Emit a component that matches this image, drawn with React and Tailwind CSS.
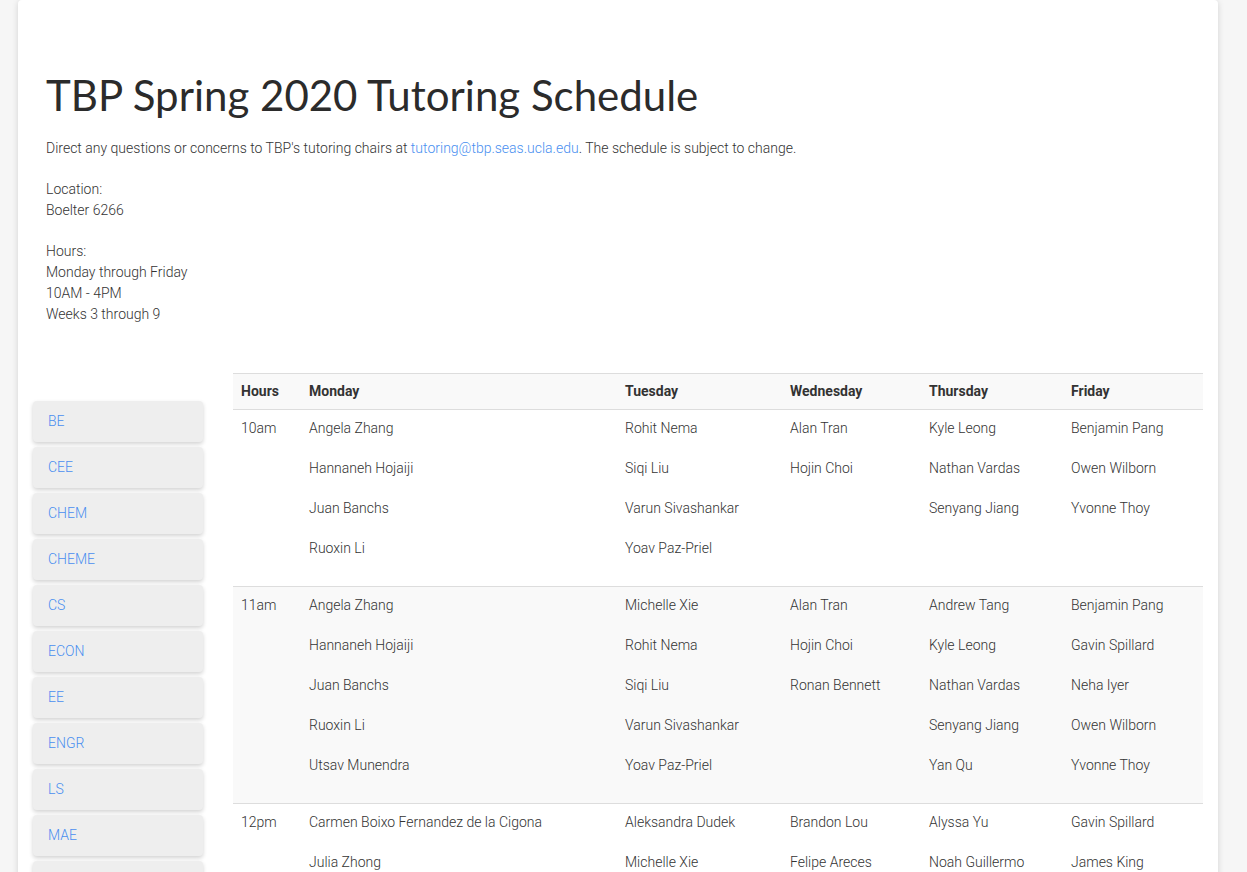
const majors = ['BE', 'CEE', 'CHEM', 'CHEME', 'CS', 'ECON', 'EE', 'ENGR', 'LS', 'MAE', 'MATH', 'MSE', 'PHYSICS', 'STATS'];

const days = ['Monday', 'Tuesday', 'Wednesday', 'Thursday', 'Friday'];

const schedule = [
  {
    hour: '10am',
    slots: [
      ['Angela Zhang', 'Hannaneh Hojaiji', 'Juan Banchs', 'Ruoxin Li'],
      ['Rohit Nema', 'Siqi Liu', 'Varun Sivashankar', 'Yoav Paz-Priel'],
      ['Alan Tran', 'Hojin Choi'],
      ['Kyle Leong', 'Nathan Vardas', 'Senyang Jiang'],
      ['Benjamin Pang', 'Owen Wilborn', 'Yvonne Thoy'],
    ],
  },
  {
    hour: '11am',
    slots: [
      ['Angela Zhang', 'Hannaneh Hojaiji', 'Juan Banchs', 'Ruoxin Li', 'Utsav Munendra'],
      ['Michelle Xie', 'Rohit Nema', 'Siqi Liu', 'Varun Sivashankar', 'Yoav Paz-Priel'],
      ['Alan Tran', 'Hojin Choi', 'Ronan Bennett'],
      ['Andrew Tang', 'Kyle Leong', 'Nathan Vardas', 'Senyang Jiang', 'Yan Qu'],
      ['Benjamin Pang', 'Gavin Spillard', 'Neha Iyer', 'Owen Wilborn', 'Yvonne Thoy'],
    ],
  },
  {
    hour: '12pm',
    slots: [
      ['Carmen Boixo Fernandez de la Cigona', 'Julia Zhong', 'Kevin Tan'],
      ['Aleksandra Dudek', 'Michelle Xie', 'Rohit Nema'],
      ['Brandon Lou', 'Felipe Areces'],
      ['Alyssa Yu', 'Noah Guillermo', 'Yan Qu'],
      ['Gavin Spillard', 'James King', 'Neha Iyer'],
    ],
  },
];

const colW = ['w-[68px]', 'w-[316px]', 'w-[165px]', 'w-[139px]', 'w-[142px]', 'w-[140px]'];

export default function App() {
  return (
    <div className="min-h-screen bg-[#f6f6f6] font-['Roboto',sans-serif] font-light text-[14px] text-[#333]">
      <div className="ml-[18px] w-[1200px] bg-white rounded-[4px] shadow-[0_1px_6px_rgba(0,0,0,0.15)] pb-10">
        <div className="px-[28px] pt-[72px]">
          <h1 className="font-['Lato',sans-serif] font-normal text-[42px] leading-[46px] text-[#2b2b2b]">
            TBP Spring 2020 Tutoring Schedule
          </h1>
          <p className="mt-[20px] leading-[21px]">
            Direct any questions or concerns to TBP's tutoring chairs at{' '}
            <a href="#" className="text-[#4a8ff0]">tutoring@tbp.seas.ucla.edu</a>. The schedule is subject to change.
          </p>
          <p className="mt-[20px] leading-[21px]">Location:<br />Boelter 6266</p>
          <p className="mt-[20px] leading-[21px]">Hours:<br />Monday through Friday<br />10AM - 4PM<br />Weeks 3 through 9</p>
        </div>

        <div className="flex items-start gap-[30px] px-[15px] mt-[48px]">
          <div className="w-[170px] shrink-0 mt-[28px] flex flex-col gap-[5px]">
            {majors.map(m => (
              <button key={m} className="h-[41px] text-left px-[15px] bg-[#eeeeee] rounded-[4px] shadow-[0_2px_4px_rgba(0,0,0,0.18)] text-[#4a8ff0] font-light text-[14px]">
                {m}
              </button>
            ))}
          </div>

          <table className="w-[970px] border-collapse table-fixed border-t border-[#dddddd]">
            <thead>
              <tr className="bg-[#f9f9f9] border-b border-[#dddddd]">
                <th className={`${colW[0]} h-[36px] px-2 text-left font-bold text-[#333]`}>Hours</th>
                {days.map((d, i) => (
                  <th key={d} className={`${colW[i + 1]} px-2 text-left font-bold text-[#333]`}>{d}</th>
                ))}
              </tr>
            </thead>
            <tbody>
              {schedule.map((row, ri) => (
                <tr key={row.hour} className={`border-b border-[#dddddd] ${ri % 2 === 1 ? 'bg-[#f9f9f9]' : ''}`}>
                  <td className="align-top px-2 py-2 leading-[20px]">{row.hour}</td>
                  {row.slots.map((names, i) => (
                    <td key={i} className="align-top px-2 py-2">
                      {names.map(n => (
                        <div key={n} className="leading-[20px] mb-[20px] whitespace-nowrap">{n}</div>
                      ))}
                    </td>
                  ))}
                </tr>
              ))}
            </tbody>
          </table>
        </div>
      </div>
    </div>
  );
}
